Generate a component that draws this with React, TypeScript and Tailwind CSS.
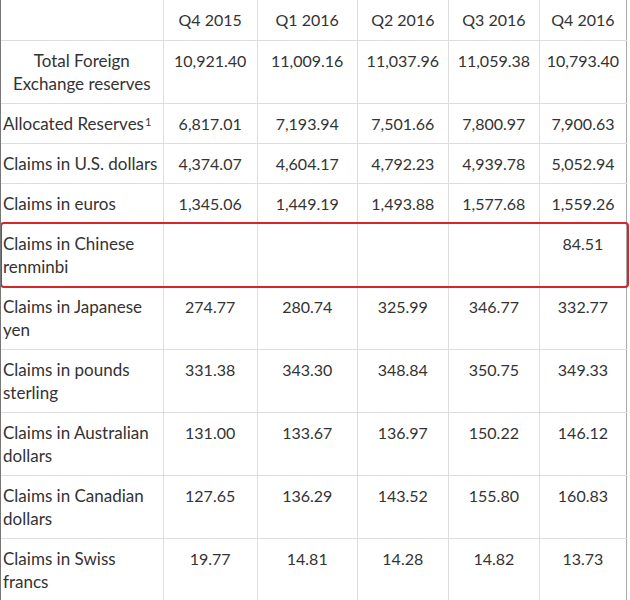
import React from 'react';

const headers = ['Q4 2015', 'Q1 2016', 'Q2 2016', 'Q3 2016', 'Q4 2016'];

type Row = { label: React.ReactNode; values: string[]; center?: boolean; highlight?: boolean };

const rows: Row[] = [
  { label: 'Total Foreign Exchange reserves', values: ['10,921.40', '11,009.16', '11,037.96', '11,059.38', '10,793.40'], center: true },
  { label: <>Allocated Reserves<sup className="text-[11px] relative -top-[4px] ml-[1px]">1</sup></>, values: ['6,817.01', '7,193.94', '7,501.66', '7,800.97', '7,900.63'] },
  { label: 'Claims in U.S. dollars', values: ['4,374.07', '4,604.17', '4,792.23', '4,939.78', '5,052.94'] },
  { label: 'Claims in euros', values: ['1,345.06', '1,449.19', '1,493.88', '1,577.68', '1,559.26'] },
  { label: 'Claims in Chinese renminbi', values: ['', '', '', '', '84.51'], highlight: true },
  { label: 'Claims in Japanese yen', values: ['274.77', '280.74', '325.99', '346.77', '332.77'] },
  { label: 'Claims in pounds sterling', values: ['331.38', '343.30', '348.84', '350.75', '349.33'] },
  { label: 'Claims in Australian dollars', values: ['131.00', '133.67', '136.97', '150.22', '146.12'] },
  { label: 'Claims in Canadian dollars', values: ['127.65', '136.29', '143.52', '155.80', '160.83'] },
  { label: 'Claims in Swiss francs', values: ['19.77', '14.81', '14.28', '14.82', '13.73'] },
];

// column widths read off the screenshot
const widths = ['w-[162px]', 'w-[94px]', 'w-[100px]', 'w-[91px]', 'w-[91px]', 'w-[87px]'];

export default function App() {
  return (
    <div className="w-[630px] h-[600px] overflow-hidden bg-white border-l border-[#777] font-['Lato','Open_Sans',sans-serif] text-[16px] text-[#333]">
      <table className="table-fixed border-collapse w-[626px] border-r border-[#aaa]">
        <colgroup>
          {widths.map((w, i) => (
            <col key={i} className={w} />
          ))}
        </colgroup>
        <thead>
          <tr className="h-[40px]">
            <th className="border-b border-[#ddd]"></th>
            {headers.map((h) => (
              <th key={h} className="border-b border-l border-[#ddd] font-normal text-center align-top pt-[8px] leading-[23px]">
                {h}
              </th>
            ))}
          </tr>
        </thead>
        <tbody>
          {rows.map((r, i) => (
            <tr key={i}>
              <td
                className={`relative border-b border-[#ddd] align-top py-[8px] leading-[23px] text-[17px] ${
                  r.center ? 'text-center px-2' : 'text-left pl-[2px] pr-1'
                }`}
              >
                {r.label}
                {/* red annotation box drawn over the whole row */}
                {r.highlight && (
                  <div className="absolute -left-[1px] -top-[2px] w-[629px] h-[66px] border-2 border-[#d9242a] rounded-[4px] pointer-events-none" />
                )}
              </td>
              {r.values.map((v, j) => (
                <td key={j} className="border-b border-l border-[#ddd] text-center align-top py-[8px] leading-[23px]">
                  {v}
                </td>
              ))}
            </tr>
          ))}
        </tbody>
      </table>
    </div>
  );
}
